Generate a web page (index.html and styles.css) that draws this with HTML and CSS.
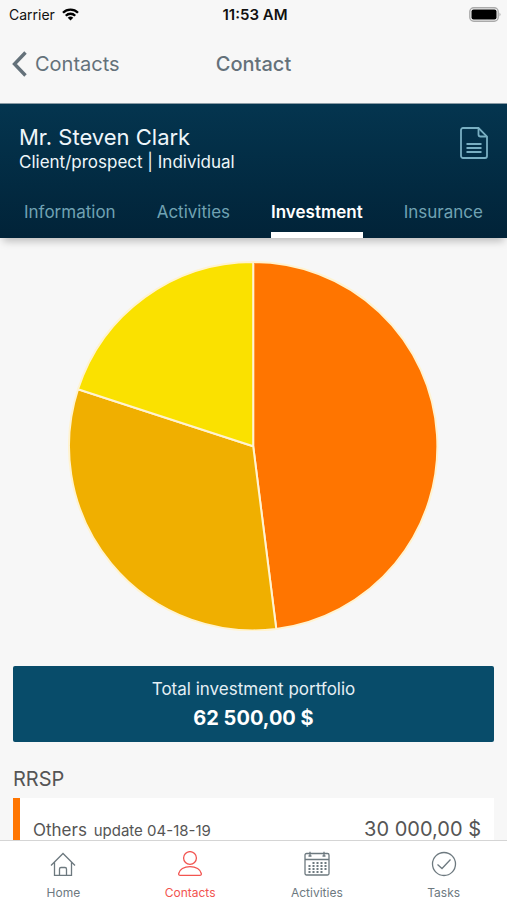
FILE: index.html
```html
<!DOCTYPE html>
<html lang="en">
<head>
    <meta charset="UTF-8">
    <title>Contact</title>
    <meta name="viewport" content="width=device-width, initial-scale=1.0">
    <link rel="stylesheet" href="styles.css">
</head>
<body>
<div class="app">
    <div class="status">
        <div class="carrier">
            <span>Carrier</span>
            <svg width="17" height="13" viewBox="0 0 17 13" fill="none" stroke="#000" stroke-width="2.3">
                <path d="M1 4.8a10.6 10.6 0 0 1 15 0"/>
                <path d="M3.8 7.7a6.6 6.6 0 0 1 9.4 0"/>
                <path d="M8.5 12.6L5.7 9.8a4 4 0 0 1 5.6 0z" fill="#000" stroke="none"/>
            </svg>
        </div>
        <strong>11:53 AM</strong>
        <div class="battery">
            <svg width="32" height="15" viewBox="0 0 32 15">
                <rect x=".8" y=".8" width="28.4" height="13.4" rx="4" fill="none" stroke="#aaa" stroke-width="1.4"/>
                <rect x="2.5" y="2.5" width="25" height="10" rx="2" fill="#000"/>
                <path d="M30.5 5.5q2 2 0 4z" fill="#aaa"/>
            </svg>
        </div>
    </div>
    <nav class="navbar">
        <a class="back" href="#contacts">
            <svg width="15" height="26" viewBox="0 0 15 26" fill="none" stroke="currentColor" stroke-width="3.4">
                <path d="M13.5 1.5L2.5 13l11 11.5"/>
            </svg>
            Contacts
        </a>
        <h1>Contact</h1>
    </nav>
    <header class="header">
        <div class="person">
            <div>
                <h2>Mr. Steven Clark</h2>
                <p>Client/prospect | Individual</p>
            </div>
            <button class="note" type="button" aria-label="Notes">
                <svg width="28" height="32" viewBox="0 0 28 32" fill="none" stroke="currentColor" stroke-width="1.8">
                    <path d="M3 1h15.500L27 9.500V29a2 2 0 0 1-2 2H3a2 2 0 0 1-2-2V3a2 2 0 0 1 2-2z"/>
                    <path d="M18.500 1v6.500a2 2 0 0 0 2 2H27M6.500 17h15M6.500 21h15M6.500 25h15"/>
                </svg>
            </button>
        </div>
        <div class="tabs">
            <a href="#information">Information</a>
            <a href="#activities">Activities</a>
            <a class="active" href="#investment">Investment</a>
            <a href="#insurance">Insurance</a>
        </div>
    </header>
    <main class="content">
        <svg class="pie" viewBox="-185 -185 370 370" stroke="#fff3d0" stroke-width="2" stroke-linejoin="round">
            <path fill="#ff7500" d="M0 0V-184A184 184 0 0 1 23.06 182.55z"/>
            <path fill="#f0af00" d="M0 0L23.06 182.55A184 184 0 0 1-174.99-56.86z"/>
            <path fill="#fae100" d="M0 0L-174.99-56.86A184 184 0 0 1 0-184z"/>
        </svg>
        <div class="total">
            <span>Total investment portfolio</span>
            <strong>62 500,00 $</strong>
        </div>
        <h3>RRSP</h3>
        <div class="card">
            <div>Others <small>update 04-18-19</small></div>
            <span class="amount">30 000,00 $</span>
        </div>
    </main>
    <nav class="tabbar">
        <a href="#home">
            <svg width="26" height="26" viewBox="0 0 26 26" fill="none" stroke="currentColor" stroke-width="1.3">
                <path d="M1 14.500L13 2.500l12 12M4.500 11.500V24.300h5V18q0-1.500 1.500-1.500h4q1.500 0 1.500 1.500v6.300h5V11.500M9.500 24.300h7"/>
            </svg>
            Home
        </a>
        <a class="active" href="#contacts">
            <svg width="26" height="26" viewBox="0 0 26 26" fill="none" stroke="currentColor" stroke-width="1.3">
                <circle cx="13" cy="7" r="6.4"/>
                <path d="M3.2 24.3q-1.8 0-1.5-1.8C2.5 18.5 7 15.6 13 15.6s10.500 2.900 11.300 6.900q.3 1.800-1.500 1.800z"/>
            </svg>
            Contacts
        </a>
        <a href="#calendar">
            <svg width="26" height="26" viewBox="0 0 26 26" fill="none" stroke="currentColor" stroke-width="1.3">
                <rect x="1" y="2.5" width="24" height="21.5" rx="1.5"/>
                <path d="M1 8.500h24M6 .8v4M20 .8v4M4.500 5h3M18.500 5h3"/>
                <path stroke-width="2" stroke-dasharray="2 2" d="M8.500 12h14M4.500 15h18M4.500 18h18M4.500 21h14"/>
            </svg>
            Activities
        </a>
        <a href="#tasks">
            <svg width="26" height="26" viewBox="0 0 26 26" fill="none" stroke="currentColor" stroke-width="1.3">
                <circle cx="13" cy="13" r="11.5"/>
                <path d="M6.500 13.500l4.500 4 8.500-9"/>
            </svg>
            Tasks
        </a>
    </nav>
</div>
</body>
</html>
```
FILE: styles.css
```css
* {
    box-sizing: border-box;
}

body, h1, h2, h3, p {
    margin: 0;
}

body {
    background: #f7f7f7;
    color: #555;
    font-family: Inter, Roboto, sans-serif;
    font-size: 17px;
}

a {
    color: inherit;
    text-decoration: none;
}

svg {
    display: block;
}

.app {
    height: 100vh;
    display: flex;
    flex-direction: column;
}

.status {
    display: grid;
    grid-template-columns: 1fr auto 1fr;
    align-items: center;
    height: 28px;
    padding: 0 6px 0 9px;
    color: #111;
    font-size: 14px;
}

.status strong {
    font-size: 15px;
    font-weight: 600;
}

.carrier {
    display: flex;
    align-items: center;
    gap: 7px;
}

.battery {
    justify-self: end;
}

.navbar {
    display: grid;
    grid-template-columns: 1fr auto 1fr;
    align-items: center;
    height: 75px;
    padding: 0 12px 4px;
    color: #64717a;
}

.navbar h1 {
    font-size: 20px;
    font-weight: 500;
}

.back {
    display: flex;
    align-items: center;
    gap: 8px;
    font-size: 20px;
}

.header {
    position: relative;
    padding: 19px 19px 0;
    border-top: 1px solid #8a9ba5;
    background: linear-gradient(#04354f, #012338);
    box-shadow: 0 6px 8px -3px rgba(0, 0, 0, .25);
    color: #eef6fa;
}

.person {
    display: flex;
    justify-content: space-between;
    align-items: center;
}

.person h2 {
    font-size: 22px;
    font-weight: 400;
    line-height: 28px;
}

.person p {
    line-height: 22px;
}

.note {
    padding: 0;
    border: 0;
    background: none;
    color: #79afc2;
    margin-bottom: 10px;
}

.tabs {
    display: flex;
    justify-content: space-between;
    margin-top: 25px;
    padding: 0 5px;
    color: #70a2b3;
}

.tabs a {
    height: 40px;
    line-height: 28px;
}

.tabs .active {
    border-bottom: 6px solid #fff;
    color: #fff;
    font-weight: 600;
}

.content {
    flex: 1;
    min-height: 0;
    overflow: hidden;
    padding: 23px 13px 0;
}

.pie {
    width: 77%;
    margin: 0 auto 35px;
}

.total {
    display: flex;
    flex-direction: column;
    align-items: center;
    gap: 4px;
    padding: 11px 0;
    border-radius: 2px;
    background: #084c6a;
    color: #e4eff5;
    line-height: 24px;
}

.total strong {
    color: #fff;
    font-size: 20px;
    font-weight: 700;
    line-height: 26px;
}

.content h3 {
    margin: 24px 0 6px;
    font-size: 20px;
    font-weight: 400;
    line-height: 26px;
}

.card {
    display: flex;
    justify-content: space-between;
    align-items: baseline;
    padding: 17px 13px;
    border-left: 7px solid #ff7500;
    background: #fff;
    line-height: 28px;
}

.card small {
    margin-left: 2px;
    font-size: 15px;
}

.amount {
    font-size: 20px;
}

.tabbar {
    display: grid;
    grid-template-columns: repeat(4, 1fr);
    height: 60px;
    border-top: 1px solid #d5d5d5;
    background: #fff;
    color: #6d797f;
    font-size: 12px;
}

.tabbar a {
    display: flex;
    flex-direction: column;
    align-items: center;
    gap: 8px;
    padding-top: 10px;
}

.tabbar .active {
    color: #f25450;
}
```
